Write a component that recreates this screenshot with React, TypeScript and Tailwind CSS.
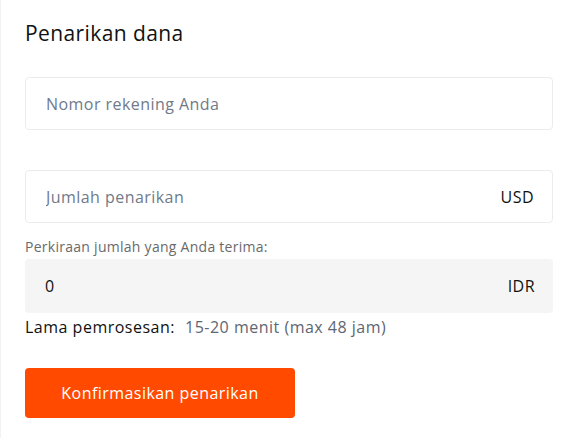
import React from 'react'

export default function App() {
  const [account, setAccount] = React.useState('')
  const [amount, setAmount] = React.useState('')

  return (
    <div
      className="h-[445px] w-[569px] bg-white"
      style={{ fontFamily: '"Open Sans", "Noto Sans", sans-serif' }}
    >
      <div className="h-[438px] border-l border-[#f2f2f2] pl-6 pr-4 pt-[18px]">
        <h2 className="text-[21px] leading-[30px] tracking-[0.4px] text-[#111]">Penarikan dana</h2>

        <div className="mt-[29px] flex h-[53px] items-center rounded-[4px] border border-[#ececec] px-5">
          <input
            value={account}
            onChange={(e) => setAccount(e.target.value)}
            placeholder="Nomor rekening Anda"
            className="w-full bg-transparent text-[16px] tracking-[0.45px] text-[#111] outline-none placeholder:text-[#707a8a]"
          />
        </div>

        <div className="mt-[40px] flex h-[53px] items-center rounded-[4px] border border-[#ececec] pl-5 pr-[18px]">
          <input
            value={amount}
            onChange={(e) => setAmount(e.target.value)}
            placeholder="Jumlah penarikan"
            className="w-full bg-transparent text-[16px] tracking-[0.45px] text-[#111] outline-none placeholder:text-[#707a8a]"
          />
          <span className="text-[16px] tracking-[0.45px] text-[#111]">USD</span>
        </div>

        <p className="mt-[14px] text-[14px] leading-[20px] tracking-[0.27px] text-[#6a6a6a]">
          Perkiraan jumlah yang Anda terima:
        </p>

        <div className="mt-[2px] flex h-[54px] items-center justify-between rounded-[4px] bg-[#f5f5f5] pl-5 pr-[18px] text-[16px] tracking-[0.45px] text-[#111]">
          <span>0</span>
          <span>IDR</span>
        </div>

        <div className="mt-[2px] flex gap-[10px] text-[16px] leading-[24px] tracking-[0.5px]">
          <span className="text-[#111]">Lama pemrosesan:</span>
          <span className="text-[#5e6673]">15-20 menit (max 48 jam)</span>
        </div>

        <button
          type="button"
          className="mt-[29px] h-[50px] w-[270px] rounded-[4px] bg-[#ff4a00] text-[16px] tracking-[0.45px] text-white hover:opacity-90"
        >
          Konfirmasikan penarikan
        </button>
      </div>
    </div>
  )
}
